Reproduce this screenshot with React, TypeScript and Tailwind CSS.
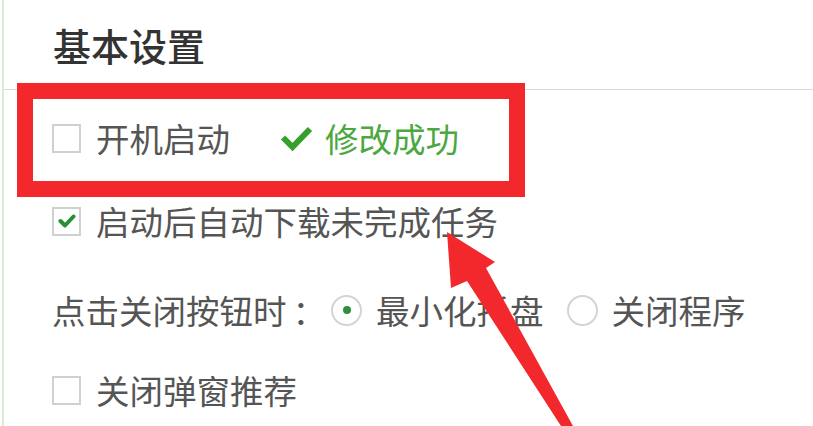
const font = { fontFamily: '"Noto Sans CJK SC", "Noto Sans", sans-serif' };

const Checkbox = ({ checked = false }: { checked?: boolean }) => (
  <span className="flex h-[29px] w-[29px] shrink-0 items-center justify-center border-2 border-[#d0d0d0] bg-white">
    {checked && (
      <svg width="18" height="16" viewBox="0 0 18 16">
        <path d="M2.5 8 L7 12.5 L15.5 3.5" fill="none" stroke="#278f36" strokeWidth="4" strokeLinecap="round" strokeLinejoin="round" />
      </svg>
    )}
  </span>
);

const Radio = ({ checked = false }: { checked?: boolean }) => (
  <span className="flex h-[31px] w-[31px] shrink-0 items-center justify-center rounded-full border-2 border-[#d4d4d4] bg-white">
    {checked && <span className="h-[8px] w-[8px] rounded-full bg-[#2e8f3e]" />}
  </span>
);

export default function App() {
  return (
    <div className="relative h-[426px] w-[813px] overflow-hidden bg-white text-[33.5px] leading-none text-[#555]" style={font}>
      <div className="ml-[2px] h-full border-l-2 border-[#dcebd8]">
        {/* header */}
        <div className="flex h-[90px] items-center border-b-[1.5px] border-[#d9d9d9] pl-[49px]">
          <h1 className="text-[38px] font-medium text-[#333]">基本设置</h1>
        </div>

        <div className="flex flex-col pl-[48px]">
          <div className="mt-[28px] flex h-[40px] items-center">
            <Checkbox />
            <span className="ml-[15px]">开机启动</span>
            <span className="ml-[50px] flex items-center text-[#4aa83e]">
              <svg width="33" height="26" viewBox="0 0 33 26">
                <path d="M3 12.5 L12.5 22 L30 4" fill="none" stroke="#37a02c" strokeWidth="6" strokeLinejoin="miter" />
              </svg>
              <span className="ml-[12px]">修改成功</span>
            </span>
          </div>

          <div className="mt-[43px] flex h-[40px] items-center">
            <Checkbox checked />
            <span className="ml-[15px]">启动后自动下载未完成任务</span>
          </div>

          <div className="mt-[49px] flex h-[40px] items-center">
            <span>点击关闭按钮时</span>
            <span className="ml-[6px]">：</span>
            <span className="ml-[5px]">
              <Radio checked />
            </span>
            <span className="ml-[14px]">最小化托盘</span>
            <span className="ml-[23px]">
              <Radio />
            </span>
            <span className="ml-[14px]">关闭程序</span>
          </div>

          <div className="mt-[40px] flex h-[40px] items-center">
            <Checkbox />
            <span className="ml-[15px]">关闭弹窗推荐</span>
          </div>
        </div>
      </div>

      {/* annotation: red frame */}
      <div className="absolute left-[17px] top-[83px] h-[114px] w-[508px] border-[16px] border-[#f2282d]" />

      {/* annotation: arrow */}
      <svg className="absolute inset-0" width="813" height="426" viewBox="0 0 813 426">
        <polygon
          points="447,232 495,262 486,268 573,426 561,426 467,281 451,288"
          fill="#f2282d"
        />
      </svg>
    </div>
  );
}
